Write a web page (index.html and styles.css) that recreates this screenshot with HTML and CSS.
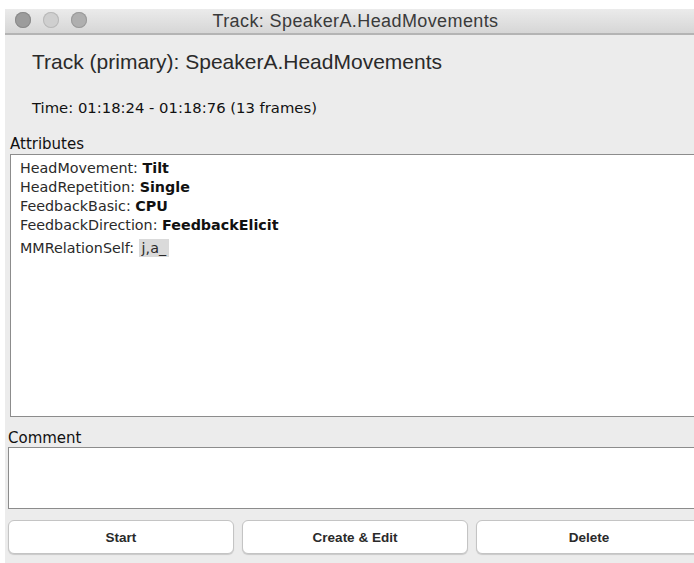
FILE: index.html
```html
<!DOCTYPE html>
<html>
<head>
<meta charset="utf-8">
<title>Track: SpeakerA.HeadMovements</title>
<link rel="stylesheet" href="styles.css">
</head>
<body>
<div class="window">
  <div class="titlebar">
    <div class="lights">
      <span class="light"></span>
      <span class="light light-mid"></span>
      <span class="light light-end"></span>
    </div>
    <div class="title">Track: SpeakerA.HeadMovements</div>
  </div>
  <div class="content">
    <h1 class="heading">Track (primary): SpeakerA.HeadMovements</h1>
    <div class="time">Time: 01:18:24 - 01:18:76 (13 frames)</div>
    <div class="label label-attr">Attributes</div>
    <div class="attr-box">
      <div class="row">HeadMovement: <b>Tilt</b></div>
      <div class="row">HeadRepetition: <b>Single</b></div>
      <div class="row">FeedbackBasic: <b>CPU</b></div>
      <div class="row">FeedbackDirection: <b>FeedbackElicit</b></div>
      <div class="row row-last">MMRelationSelf: <span class="chip">j,a_</span></div>
    </div>
    <div class="label label-comment">Comment</div>
    <div class="comment-box"></div>
    <div class="buttons">
      <button class="btn">Start</button>
      <button class="btn">Create &amp; Edit</button>
      <button class="btn">Delete</button>
    </div>
  </div>
</div>
</body>
</html>
```
FILE: styles.css
```css
html, body {
  margin: 0;
  padding: 0;
  background: #ffffff;
  overflow: hidden;
}

.window {
  margin: 9px 0 0 5px;
  width: 700px;
  height: 560px;
  background: #ececec;
  font-family: "DejaVu Sans", "Liberation Sans", sans-serif;
  color: #1e1e1e;
}

.titlebar {
  position: relative;
  height: 24px;
  background: linear-gradient(#ebebeb, #d6d6d6);
  border-bottom: 2px solid #b4b4b4;
  display: flex;
  align-items: center;
  justify-content: center;
}

.lights {
  position: absolute;
  left: 10px;
  top: 3px;
  display: flex;
  gap: 12px;
}

.light {
  width: 16px;
  height: 16px;
  border-radius: 50%;
  background: #9c9c9c;
  box-shadow: inset 0 0 0 1px #8a8a8a;
}

.light-mid {
  background: #cfcfcf;
  box-shadow: inset 0 0 0 1px #b8b8b8;
}

.light-end {
  background: #afafaf;
  box-shadow: inset 0 0 0 1px #9a9a9a;
}

.title {
  font-family: "Liberation Sans", sans-serif;
  font-size: 18px;
  letter-spacing: 0.4px;
  color: #3a3a3a;
  margin-left: 1px;
}

.content {
  padding: 0 0 0 3px;
}

.heading {
  margin: 15px 0 0 24px;
  font-family: "Liberation Sans", sans-serif;
  font-weight: normal;
  font-size: 21px;
  line-height: 24px;
  color: #2a2a2a;
}

.time {
  margin: 25px 0 0 24px;
  font-size: 14.8px;
  line-height: 18px;
  color: #111;
}

.label {
  font-size: 15px;
  line-height: 16px;
  color: #111;
}

.label-attr {
  margin: 19px 0 0 2px;
}

.attr-box {
  margin: 2px 0 0 2px;
  height: 249px;
  background: #ffffff;
  border: 1px solid #8c8c8c;
  padding: 4px 0 8px 9px;
  font-size: 14.3px;
}

.row {
  line-height: 19px;
  color: #2a2a2a;
}

.row b {
  color: #111;
}

.row-last {
  margin-top: 4px;
}

.chip {
  background: #dadada;
  padding: 1px 3px;
}

.label-comment {
  margin: 13px 0 0 0;
}

.comment-box {
  margin: 1px 0 0 0;
  height: 60px;
  background: #ffffff;
  border: 1px solid #8c8c8c;
}

.buttons {
  margin: 11px 0 0 0;
  display: flex;
  gap: 8px;
}

.btn {
  width: 226px;
  height: 34px;
  flex: none;
  background: #ffffff;
  border: 1px solid #c4c4c4;
  border-radius: 6px;
  box-shadow: 0 1px 1px rgba(0, 0, 0, 0.15);
  font-family: "Liberation Sans", sans-serif;
  font-size: 13.5px;
  font-weight: bold;
  color: #2a2a2a;
  padding: 0;
}
```
